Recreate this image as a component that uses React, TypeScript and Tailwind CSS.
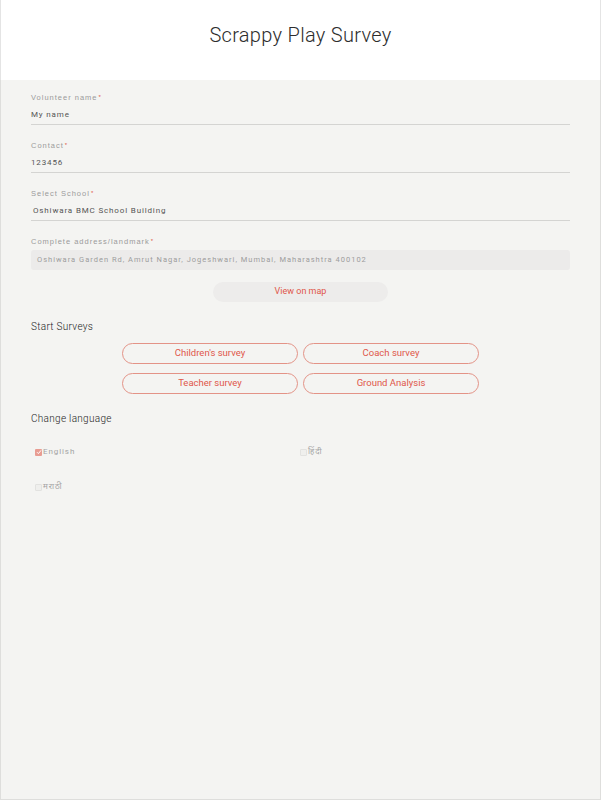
import React from "react";

const Req = () => <sup className="text-[#e0574a] text-[6px] relative -top-[1px] ml-[1px]">*</sup>;

function Field({ label, value, first, indent }: { label: string; value: string; first?: boolean; indent?: boolean }) {
  return (
    <div className={first ? "" : "mt-[16px]"}>
      <div className="h-[10px] leading-[10px] text-[7.5px] tracking-[1px] text-[#9b9b9b]">
        {label}
        <Req />
      </div>
      <div
        className={"mt-[7px] h-[10px] leading-[10px] text-[8px] tracking-[0.85px] text-[#555] pb-[4px] border-b border-[#d4d4d2] box-content " + (indent ? "pl-[2px]" : "")}
        style={{ fontFamily: "Roboto, sans-serif" }}
      >
        {value}
      </div>
    </div>
  );
}

function Pill({ text }: { text: string }) {
  return (
    <button className="h-[21px] w-[176px] rounded-full border border-[#e39387] text-[9.5px] text-[#e0574a] flex items-center justify-center bg-transparent" style={{ fontFamily: "Roboto, sans-serif" }}>
      {text}
    </button>
  );
}

function Check({ checked, label, className }: { checked?: boolean; label: string; className?: string }) {
  return (
    <div className={"flex items-center " + (className ?? "")}>
      {checked ? (
        <span className="w-[7px] h-[7px] rounded-[1px] bg-[#e89c92] flex items-center justify-center">
          <svg width="6" height="6" viewBox="0 0 6 6">
            <path d="M1 3.2 L2.4 4.6 L5 1.4" stroke="white" strokeWidth="1" fill="none" />
          </svg>
        </span>
      ) : (
        <span className="w-[7px] h-[7px] rounded-[1px] border border-[#e2e2e0] bg-[#efefed]" />
      )}
      <span className="ml-[1px] text-[8px] tracking-[0.9px] text-[#a3a3a3] leading-[10px]" style={{ fontFamily: "Roboto, 'Noto Sans', sans-serif" }}>
        {label}
      </span>
    </div>
  );
}

export default function App() {
  return (
    <div className="w-[603px] h-[800px] bg-white">
      <div className="w-[601px] h-[800px] bg-[#f4f4f2] border-x border-b border-[#dededc] flex flex-col" style={{ fontFamily: "'Liberation Sans', Arial, sans-serif" }}>
        <div className="h-[80px] bg-white flex items-center justify-center -mx-px border-x border-[#e4e4e4]">
          <h1 className="text-[20px] text-[#2d2d2d] tracking-[0.3px] -mt-[10px]" style={{ fontFamily: "Roboto, sans-serif", fontWeight: 300 }}>
            Scrappy Play Survey
          </h1>
        </div>
        <div className="px-[30px] pt-[13px]">
          <Field first label="Volunteer name" value="My name" />
          <Field label="Contact" value="123456" />
          <Field indent label="Select School" value="Oshiwara BMC School Building" />
          <div className="mt-[16px]">
            <div className="h-[10px] leading-[10px] text-[7.5px] tracking-[1px] text-[#9b9b9b]">
              Complete address/landmark
              <Req />
            </div>
            <div className="mt-[3px] h-[20px] rounded-[3px] bg-[#ecebea] flex items-center px-[6px] text-[7.5px] tracking-[1px] text-[#9d9d9d]" style={{ fontFamily: "Roboto, sans-serif" }}>
              Oshiwara Garden Rd, Amrut Nagar, Jogeshwari, Mumbai, Maharashtra 400102
            </div>
          </div>
          <div className="mt-[12px] flex justify-center">
            <button className="w-[175px] h-[20px] rounded-full bg-[#edeceb] text-[9px] text-[#e0574a]" style={{ fontFamily: "Roboto, sans-serif" }}>
              View on map
            </button>
          </div>
          <div className="mt-[20px] h-[10px] leading-[10px] text-[10px] text-[#222] tracking-[0.3px]" style={{ fontFamily: "Roboto, sans-serif", fontWeight: 300 }}>
            Start Surveys
          </div>
          <div className="mt-[11px] flex flex-col items-center gap-[9px]">
            <div className="flex gap-[5px]">
              <Pill text="Children's survey" />
              <Pill text="Coach survey" />
            </div>
            <div className="flex gap-[5px]">
              <Pill text="Teacher survey" />
              <Pill text="Ground Analysis" />
            </div>
          </div>
          <div className="mt-[20px] h-[10px] leading-[10px] text-[10px] text-[#222] tracking-[0.3px]" style={{ fontFamily: "Roboto, sans-serif", fontWeight: 300 }}>
            Change language
          </div>
          <div className="mt-[23px] flex pl-[4px]">
            <Check checked label="English" className="w-[265px]" />
            <Check label="हिंदी" />
          </div>
          <div className="mt-[25px] pl-[4px]">
            <Check label="मराठी" />
          </div>
        </div>
      </div>
    </div>
  );
}
